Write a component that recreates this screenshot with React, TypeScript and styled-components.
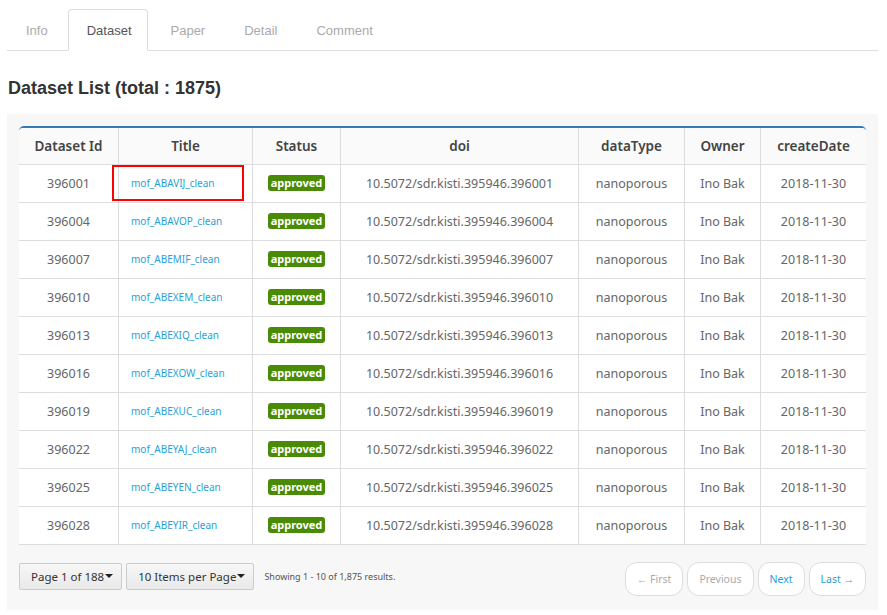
import React from "react";
import styled, { createGlobalStyle } from "styled-components";

const GlobalStyle = createGlobalStyle`
  html, body { margin: 0; padding: 0; background: #fff; }
  body { font-family: "Liberation Sans", Arial, sans-serif; }
`;

const Page = styled.div`
  width: 887px;
  height: 615px;
  padding: 9px 9px 0 7px;
  box-sizing: border-box;
  overflow: hidden;
`;

const TabBar = styled.div`
  display: flex;
  gap: 4px;
  border-bottom: 1px solid #ddd;
  height: 41px;
`;

const Tab = styled.div<{ $active?: boolean }>`
  padding: 0 15px 0 18px;
  display: flex;
  align-items: center;
  font-size: 13px;
  box-sizing: border-box;
  color: ${(p) => (p.$active ? "#555" : "#aaa")};
  background: ${(p) => (p.$active ? "#fff" : "transparent")};
  border: 1px solid ${(p) => (p.$active ? "#ddd" : "transparent")};
  border-bottom: ${(p) => (p.$active ? "1px solid #fff" : "none")};
  border-radius: 4px 4px 0 0;
  margin-bottom: ${(p) => (p.$active ? "-1px" : "0")};
  height: ${(p) => (p.$active ? "42px" : "41px")};
`;

const Heading = styled.h2`
  margin: 0;
  padding: 26px 0 0 1px;
  height: 37px;
  font-size: 18px;
  font-weight: bold;
  color: #333;
  line-height: 22px;
`;

const Panel = styled.div`
  background: #f7f7f7;
  padding: 12px 12px 13px 12px;
  height: 496px;
  box-sizing: border-box;
`;

const Table = styled.table`
  width: 847px;
  border-collapse: separate;
  border-spacing: 0;
  background: #fff;
  border-top: 2px solid #337ab7;
  border-radius: 5px 5px 0 0;
  table-layout: fixed;
  font-family: "Noto Sans", "Open Sans", sans-serif;
`;

const Th = styled.th`
  height: 36px;
  padding: 0;
  background: #fafafa;
  font-size: 13.5px;
  font-weight: 600;
  color: #444;
  text-align: center;
  border-bottom: 1px solid #ddd;
  border-left: 1px solid #ddd;
  &:first-child { border-left: none; border-top-left-radius: 4px; }
  &:last-child { border-top-right-radius: 4px; }
`;

const Td = styled.td`
  height: 37px;
  padding: 0;
  font-size: 12.5px;
  color: #666;
  text-align: center;
  border-bottom: 1px solid #ddd;
  border-left: 1px solid #ddd;
  &:first-child { border-left: none; }
`;

const TitleTd = styled(Td)`
  text-align: left;
  padding-left: 12px;
  position: relative;
`;

const Link = styled.a`
  color: #2a9fd6;
  font-size: 10px;
  text-decoration: none;
  position: relative;
  top: -1px;
`;

const Highlight = styled.div`
  position: absolute;
  left: -7px;
  top: 0px;
  width: 132px;
  height: 36px;
  border: 2px solid #f00;
  box-sizing: border-box;
  pointer-events: none;
`;

const Badge = styled.span`
  display: inline-block;
  background: #4a8b05;
  color: #fff;
  font-size: 11px;
  font-weight: bold;
  line-height: 15px;
  padding: 0 3px 1px;
  border-radius: 3px;
  position: relative;
  top: -1px;
`;

const Footer = styled.div`
  display: flex;
  align-items: flex-start;
  margin-top: 17px;
`;

const DropButton = styled.button`
  height: 27px;
  margin-top: 1px;
  padding: 0 8px 0 11px;
  margin-right: 4px;
  border: 1px solid #ccc;
  border-radius: 2px;
  background: linear-gradient(#f7f7f7, #e9e9e9);
  font-family: "Noto Sans", "Open Sans", sans-serif;
  font-size: 11.5px;
  color: #333;
  display: flex;
  align-items: center;
`;

const Caret = styled.span`
  display: inline-block;
  width: 0;
  height: 0;
  border-left: 4px solid transparent;
  border-right: 4px solid transparent;
  border-top: 4px solid #222;
  margin-left: 1px;
  position: relative;
  top: -1px;
`;

const Showing = styled.span`
  font-family: "Noto Sans", "Open Sans", sans-serif;
  font-size: 9px;
  color: #555;
  margin-left: 6px;
  line-height: 29px;
`;

const Pager = styled.div`
  margin-left: auto;
  display: flex;
  gap: 4px;
`;

const PageButton = styled.button<{ $enabled?: boolean }>`
  height: 34px;
  padding: 0 11px;
  border: 1px solid #ddd;
  border-radius: 12px;
  background: #fff;
  font-family: "Noto Sans", "Open Sans", sans-serif;
  font-size: 10.5px;
  color: ${(p) => (p.$enabled ? "#2a9fd6" : "#aaa")};
`;

const rows = [
  ["396001", "mof_ABAVIJ_clean"],
  ["396004", "mof_ABAVOP_clean"],
  ["396007", "mof_ABEMIF_clean"],
  ["396010", "mof_ABEXEM_clean"],
  ["396013", "mof_ABEXIQ_clean"],
  ["396016", "mof_ABEXOW_clean"],
  ["396019", "mof_ABEXUC_clean"],
  ["396022", "mof_ABEYAJ_clean"],
  ["396025", "mof_ABEYEN_clean"],
  ["396028", "mof_ABEYIR_clean"],
];

const widths = [99, 134, 88, 238, 106, 76, 106];
const headers = ["Dataset Id", "Title", "Status", "doi", "dataType", "Owner", "createDate"];

export default function App() {
  return (
    <>
      <GlobalStyle />
      <Page>
        <TabBar>
          <Tab>Info</Tab>
          <Tab $active>Dataset</Tab>
          <Tab>Paper</Tab>
          <Tab>Detail</Tab>
          <Tab>Comment</Tab>
        </TabBar>
        <Heading>Dataset List (total : 1875)</Heading>
        <Panel>
          <Table>
            <colgroup>
              {widths.map((w, i) => (
                <col key={i} style={{ width: w }} />
              ))}
            </colgroup>
            <thead>
              <tr>
                {headers.map((h) => (
                  <Th key={h}>{h}</Th>
                ))}
              </tr>
            </thead>
            <tbody>
              {rows.map(([id, title], i) => (
                <tr key={id}>
                  <Td>{id}</Td>
                  <TitleTd>
                    <Link href="#">{title}</Link>
                    {i === 0 && <Highlight />}
                  </TitleTd>
                  <Td>
                    <Badge>approved</Badge>
                  </Td>
                  <Td>10.5072/sdr.kisti.395946.{id}</Td>
                  <Td>nanoporous</Td>
                  <Td>Ino Bak</Td>
                  <Td>2018-11-30</Td>
                </tr>
              ))}
            </tbody>
          </Table>
          <Footer>
            <DropButton>
              Page 1 of 188<Caret />
            </DropButton>
            <DropButton>
              10 Items per Page<Caret />
            </DropButton>
            <Showing>Showing 1 - 10 of 1,875 results.</Showing>
            <Pager>
              <PageButton>← First</PageButton>
              <PageButton>Previous</PageButton>
              <PageButton $enabled>Next</PageButton>
              <PageButton $enabled>Last →</PageButton>
            </Pager>
          </Footer>
        </Panel>
      </Page>
    </>
  );
}
